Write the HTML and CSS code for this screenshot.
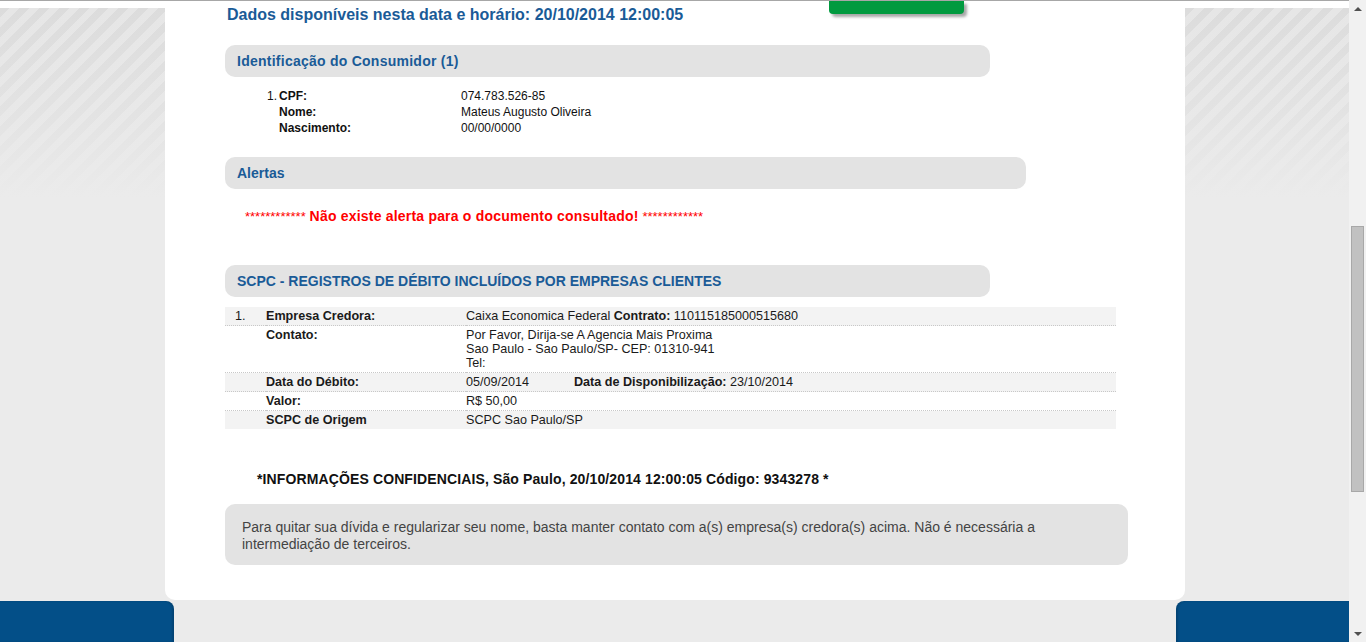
FILE: index.html
```html
<!DOCTYPE html>
<html lang="pt-BR">
<head>
<meta charset="utf-8">
<title>Consulta SCPC</title>
<link rel="stylesheet" href="styles.css">
</head>
<body>
<div class="viewport">
  <div class="topline"></div>
  <div class="page">
    <aside class="side"><div class="side-top"></div><div class="stripes"></div></aside>
    <main class="panel">
      <div class="green-btn"></div>
      <h1 class="title">Dados disponíveis nesta data e horário: 20/10/2014 12:00:05</h1>

      <div class="sec-head w765 ls">Identificação do Consumidor (1)</div>
      <div class="consumer">
        <span class="num">1.</span><span class="lbl">CPF:</span><span class="val">074.783.526-85</span>
        <span class="num"></span><span class="lbl">Nome:</span><span class="val">Mateus Augusto Oliveira</span>
        <span class="num"></span><span class="lbl">Nascimento:</span><span class="val">00/00/0000</span>
      </div>

      <div class="sec-head w801 gap-alert">Alertas</div>
      <p class="alert"><span class="stars">************</span> <span class="msg">Não existe alerta para o documento consultado!</span> <span class="stars">************</span></p>

      <div class="sec-head w765 gap-scpc">SCPC - REGISTROS DE DÉBITO INCLUÍDOS POR EMPRESAS CLIENTES</div>
      <table class="debt">
        <tr class="odd">
          <td class="c-num">1.</td>
          <td class="c-lbl">Empresa Credora:</td>
          <td class="c-val">Caixa Economica Federal <b>Contrato:</b> 110115185000515680</td>
        </tr>
        <tr>
          <td class="c-num"></td>
          <td class="c-lbl">Contato:</td>
          <td class="c-val">Por Favor, Dirija-se A Agencia Mais Proxima<br>Sao Paulo - Sao Paulo/SP- CEP: 01310-941<br>Tel:</td>
        </tr>
        <tr class="odd">
          <td class="c-num"></td>
          <td class="c-lbl">Data do Débito:</td>
          <td class="c-val"><span class="date">05/09/2014</span><b>Data de Disponibilização:</b> 23/10/2014</td>
        </tr>
        <tr>
          <td class="c-num"></td>
          <td class="c-lbl">Valor:</td>
          <td class="c-val">R$ 50,00</td>
        </tr>
        <tr class="odd last">
          <td class="c-num"></td>
          <td class="c-lbl">SCPC de Origem</td>
          <td class="c-val">SCPC Sao Paulo/SP</td>
        </tr>
      </table>

      <p class="confid">*INFORMAÇÕES CONFIDENCIAIS, São Paulo, 20/10/2014 12:00:05 Código: 9343278 *</p>

      <div class="info">Para quitar sua dívida e regularizar seu nome, basta manter contato com a(s) empresa(s) credora(s) acima. Não é necessária a intermediação de terceiros.</div>
    </main>
    <aside class="side"><div class="side-top"></div><div class="stripes"></div></aside>
  </div>
  <footer class="footer">
    <div class="foot-left"></div>
    <div class="foot-mid"></div>
    <div class="foot-right"></div>
  </footer>
</div>
<div class="scrollbar">
  <div class="arrow-up"></div>
  <div class="track"><div class="thumb"></div></div>
  <div class="arrow-down"></div>
</div>
</body>
</html>
```

FILE: styles.css
```css
html, body {
  margin: 0;
  padding: 0;
  height: 642px;
  overflow: hidden;
}
body {
  display: flex;
  font-family: "Liberation Sans", Arial, sans-serif;
  background: #ebebeb;
  color: #111;
}
.viewport {
  width: 1349px;
  display: flex;
  flex-direction: column;
}
.topline {
  height: 1px;
  background: #a7a7a7;
}
.page {
  display: grid;
  grid-template-columns: 165px 1020px 164px;
  background: #ebebeb;
}
.side {
  display: flex;
  flex-direction: column;
}
.side-top {
  height: 7px;
  background: #fff;
}
.stripes {
  height: 190px;
  background:
    linear-gradient(to bottom, rgba(235,235,235,0) 0%, rgba(235,235,235,0.5) 60%, #ebebeb 100%),
    repeating-linear-gradient(135deg, #dcdcdc 0 7px, #e6e6e6 7px 14px);
}
.panel {
  position: relative;
  background: #fff;
  border-radius: 0 0 10px 10px;
  padding: 4px 0 35px 60px;
}
.green-btn {
  position: absolute;
  left: 664px;
  top: 0;
  width: 135px;
  height: 13px;
  background: #019a3f;
  border-radius: 0 0 4px 4px;
  box-shadow: 3px 3px 3px rgba(0,0,0,0.35);
}
.title {
  margin: 0;
  font-size: 16px;
  line-height: 20px;
  font-weight: bold;
  color: #1a5b97;
  padding-left: 2px;
}
.sec-head {
  margin-top: 20px;
  height: 32px;
  line-height: 32px;
  background: #e3e3e3;
  border-radius: 10px;
  padding-left: 12px;
  box-sizing: border-box;
  font-size: 14px;
  font-weight: bold;
  color: #1a5b97;
}
.sec-head.ls { letter-spacing: 0.25px; }
.w765 { width: 765px; }
.w801 { width: 801px; }
.gap-alert { margin-top: 21px; }
.gap-scpc { margin-top: 38px; }

.consumer {
  margin-top: 11px;
  padding-left: 42px;
  display: grid;
  grid-template-columns: 12px 182px 1fr;
  font-size: 12px;
  line-height: 16px;
}
.consumer .lbl { font-weight: bold; }

.alert {
  margin: 17px 0 0;
  padding-left: 20px;
  line-height: 20px;
  font-size: 14px;
  font-weight: bold;
  color: #ff0000;
}
.alert .msg { letter-spacing: 0.2px; }
.alert .stars {
  font-size: 13px;
  font-weight: normal;
}

.debt {
  margin-top: 10px;
  width: 891px;
  border-collapse: collapse;
  font-size: 12.6px;
  line-height: 14px;
  color: #1a1a1a;
}
.debt td {
  padding: 2px 0;
  vertical-align: top;
}
.debt tr { border-bottom: 1px dotted #c8c8c8; }
.debt tr.last { border-bottom: 0; }
.debt tr.odd { background: #f3f3f3; }
.debt .c-num { width: 31px; padding-left: 10px; }
.debt .c-lbl { width: 200px; font-weight: bold; }
.debt .date { display: inline-block; width: 108px; }

.confid {
  margin: 40px 0 0;
  padding-left: 32px;
  line-height: 20px;
  font-size: 14px;
  font-weight: bold;
  letter-spacing: 0.12px;
  color: #111;
}
.info {
  margin-top: 15px;
  width: 903px;
  box-sizing: border-box;
  background: #e3e3e3;
  border-radius: 10px;
  padding: 15px 17px 12px;
  font-size: 14px;
  line-height: 17px;
  color: #444;
}

.footer {
  margin-top: 1px;
  height: 41px;
  display: grid;
  grid-template-columns: 174px 1fr 173px;
}
.foot-left {
  background: #034f88;
  border-top-right-radius: 8px;
  box-shadow: inset -2px 0 2px rgba(0,0,0,0.15);
}
.foot-right {
  background: #034f88;
  border-top-left-radius: 8px;
  box-shadow: inset 2px 0 2px rgba(0,0,0,0.15);
}

.scrollbar {
  width: 17px;
  background: #f1f1f1;
  display: flex;
  flex-direction: column;
}
.arrow-up, .arrow-down {
  height: 17px;
  display: flex;
  justify-content: center;
  align-items: center;
}
.arrow-up::before {
  content: "";
  border-left: 4px solid transparent;
  border-right: 4px solid transparent;
  border-bottom: 4px solid #505050;
}
.arrow-down::before {
  content: "";
  border-left: 4px solid transparent;
  border-right: 4px solid transparent;
  border-top: 4px solid #505050;
}
.track {
  flex: 1;
  padding: 209px 2px 0;
}
.thumb {
  height: 266px;
  background: #c1c1c1;
  border: 1px solid #a8a8a8;
  box-sizing: border-box;
}
```
